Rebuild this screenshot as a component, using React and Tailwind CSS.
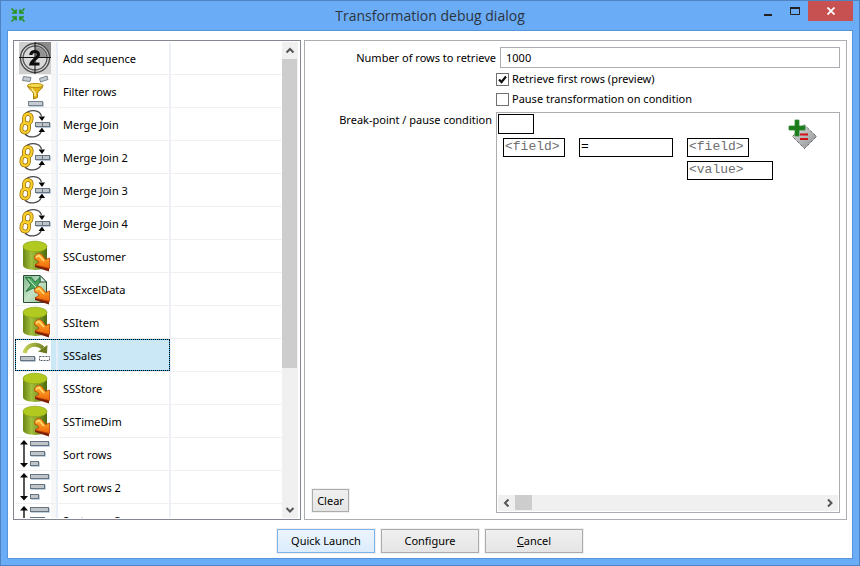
import React, { useState } from "react";

function SequenceIcon() {
  return (
    <svg width="32" height="32" viewBox="0 0 32 32" className="block" aria-hidden="true">
      <rect width="32" height="32" fill="#cfcfcf" />
      <path d="M16 0H32V16H16Z" fill="#8c8c8c" />
      <circle cx="16" cy="16" r="14.5" fill="#e4e4e4" stroke="#4a4a4a" strokeWidth="1.4" />
      <path d="M16 2.500A13.500 13.500 0 0 1 29.500 16H16Z" fill="#b0b0b0" />
      <circle cx="16" cy="16" r="12" fill="#dadada" stroke="#5c5c5c" strokeWidth="1.4" />
      <path d="M16 5A11 11 0 0 1 27 16H16Z" fill="#919191" />
      <path d="M16 0V32M0 15.500H32" stroke="#111" strokeWidth="1" />
      <path d="M11.800 13C11.800 8.300 20 8.300 19.400 13C19 16 13 18 12 22H20.500" fill="none" stroke="#0c0c0c" strokeWidth="3.200" />
    </svg>
  );
}

function FilterIcon() {
  return (
    <svg width="32" height="32" viewBox="0 0 32 32" className="block" aria-hidden="true">
      <g fill="#c5cbd1" stroke="#76828e" strokeWidth="1">
        <path d="M4.500 1.500L12 2.500L11 6.500L3.500 5.500Z" />
        <path d="M20.500 3.500L28 1L29 4.500L21.500 7Z" />
        <rect x="9.500" y="26.500" width="14" height="4" />
      </g>
      <path d="M10 31.500H24.500V27" fill="none" stroke="#bfd0df" />
      <path d="M8.500 10.500C9 14.500 14 15.500 14.500 18.500V24L18.500 22.500V18.500C19 15.500 23.500 14.500 24 10.500Z" fill="#e0b317" stroke="#a97f0a" />
      <ellipse cx="16.250" cy="10.500" rx="7.800" ry="2" fill="#f6dd4d" stroke="#b58a10" />
      <path d="M12.500 13.500L16 17.500V21" fill="none" stroke="#fff0a0" strokeWidth="1.400" />
    </svg>
  );
}

function MergeIcon() {
  return (
    <svg width="32" height="32" viewBox="0 0 32 32" className="block" aria-hidden="true">
      <path d="M6 6C10 1.500 20 1 22.500 8M6 26C10 30.500 20 30 22.500 23" fill="none" stroke="#4a4a4a" strokeWidth="1.300" />
      <path d="M19.500 8.500H26L23 13ZM19.500 24H26L23 19.500Z" fill="#050505" />
      <g fill="none" stroke="#9a6c00" strokeWidth="3.800">
        <rect x="5" y="6" width="7.500" height="9.500" rx="3.500" transform="rotate(8 8.500 11)" />
        <rect x="2.500" y="15" width="7.500" height="9.500" rx="3.500" transform="rotate(8 6 20)" />
      </g>
      <g fill="none" stroke="#f8cf2c" strokeWidth="2.300">
        <rect x="5" y="6" width="7.500" height="9.500" rx="3.500" transform="rotate(8 8.500 11)" />
        <rect x="2.500" y="15" width="7.500" height="9.500" rx="3.500" transform="rotate(8 6 20)" />
      </g>
      <path d="M17 19.500H31.500V15" fill="none" stroke="#b9c9da" strokeWidth="1" />
      <rect x="16.500" y="14.500" width="14" height="4" fill="#c0c5ca" stroke="#667380" />
      <path d="M23.500 14.500V18.500" stroke="#667380" />
    </svg>
  );
}

function OrangeArrow() {
  return (
    <>
      <path d="M16 24L30 26V31.500L16 27Z" fill="#7c1d04" />
      <path d="M15.500 17C17 13 21 12.500 23.500 15.500L26.500 19.500L30.500 18V28.500L16 25L20 22.500C19 20 17.500 19.500 16 19.500Z" fill="url(#arrowFill)" stroke="#b84206" strokeWidth=".8" />
      <path d="M17 17L20 15.500L25 21" fill="none" stroke="#ffe07a" strokeWidth="1.400" />
    </>
  );
}

function DatabaseIcon() {
  return (
    <svg width="32" height="32" viewBox="0 0 32 32" className="block" aria-hidden="true">
      <path d="M4 6V25C4 31.500 28 31.500 28 25V6Z" fill="url(#cylinder)" />
      <ellipse cx="16" cy="6.500" rx="12" ry="5.300" fill="#b2ca20" stroke="#8fa81c" strokeWidth=".8" />
      <OrangeArrow />
    </svg>
  );
}

function ExcelIcon() {
  return (
    <svg width="32" height="32" viewBox="0 0 32 32" className="block" aria-hidden="true">
      <path d="M4.500 2.500H21L27.500 9V29.500H4.500Z" fill="url(#sheet)" stroke="#2b4f36" />
      <path d="M21 2.500V9H27.500Z" fill="#dcefdc" stroke="#2b4f36" />
      <path d="M6.500 4.500H12.500L16 9L21 4.500V9L18.500 12L24.500 18.500H17.500L14.500 15L7 18.500L12 12Z" fill="#4aa45e" stroke="#1b6333" strokeWidth=".8" />
      <path d="M9 5.500L20 17.500" stroke="#d6f0d6" />
      <OrangeArrow />
    </svg>
  );
}

function DummyIcon() {
  return (
    <svg width="32" height="32" viewBox="0 0 32 32" className="block" aria-hidden="true">
      <path d="M5.500 14C8 5 18 3.500 24 9" fill="none" stroke="url(#olive)" strokeWidth="4" />
      <path d="M28.500 6L28 14.500L19 12.500Z" fill="#6e7a1e" />
      <rect x="1.500" y="17.500" width="14" height="4" fill="#c0c5ca" stroke="#667380" />
      <path d="M2 22.500H16.500V18" fill="none" stroke="#b9c9da" />
      <rect x="20.500" y="17.500" width="10" height="4" fill="#fff" stroke="#555f69" strokeDasharray="2 1" />
    </svg>
  );
}

function SortIcon() {
  return (
    <svg width="32" height="32" viewBox="0 0 32 32" className="block" aria-hidden="true">
      <path d="M5 5V26" stroke="#444" strokeWidth="1.800" />
      <path d="M1 6.500L5 2L9 6.500ZM1 25L5 29.500L9 25Z" fill="#080808" />
      <path d="M12 8.500H30.500V4M12 18.500H26.500V14M12 28.500H20.500V24" fill="none" stroke="#bfd0df" />
      <g fill="#c0c5ca" stroke="#667380">
        <rect x="11.500" y="3.500" width="18" height="4" />
        <rect x="11.500" y="13.500" width="14" height="4" />
        <rect x="11.500" y="23.500" width="8" height="4" />
      </g>
    </svg>
  );
}

function IconGradients() {
  return (
    <svg width="0" height="0" className="absolute" aria-hidden="true">
      <defs>
        <linearGradient id="arrowFill" x1="0" y1="0" x2="0" y2="1">
          <stop offset="0" stopColor="#ffb62e" />
          <stop offset="1" stopColor="#f0650a" />
        </linearGradient>
        <linearGradient id="cylinder" x1="0" y1="0" x2="1" y2="0">
          <stop offset="0" stopColor="#6a8614" />
          <stop offset=".35" stopColor="#a3bf3c" />
          <stop offset="1" stopColor="#4d6a10" />
        </linearGradient>
        <linearGradient id="sheet" x1="0" y1="0" x2="1" y2="1">
          <stop offset="0" stopColor="#7fb58a" />
          <stop offset=".5" stopColor="#c4e2c6" />
          <stop offset="1" stopColor="#8cc08f" />
        </linearGradient>
        <linearGradient id="olive" x1="0" y1="0" x2="1" y2="0">
          <stop offset="0" stopColor="#c3cf55" />
          <stop offset="1" stopColor="#7b8825" />
        </linearGradient>
        <linearGradient id="diamond" x1="0" y1="0" x2="1" y2="1">
          <stop offset="0" stopColor="#dedede" />
          <stop offset="1" stopColor="#8d9092" />
        </linearGradient>
      </defs>
    </svg>
  );
}

const steps = [
  ["Add sequence", SequenceIcon],
  ["Filter rows", FilterIcon],
  ["Merge Join", MergeIcon],
  ["Merge Join 2", MergeIcon],
  ["Merge Join 3", MergeIcon],
  ["Merge Join 4", MergeIcon],
  ["SSCustomer", DatabaseIcon],
  ["SSExcelData", ExcelIcon],
  ["SSItem", DatabaseIcon],
  ["SSSales", DummyIcon],
  ["SSStore", DatabaseIcon],
  ["SSTimeDim", DatabaseIcon],
  ["Sort rows", SortIcon],
  ["Sort rows 2", SortIcon],
  ["Sort rows 3", SortIcon],
];

const chevrons = {
  up: "M1.500 6.500L5 3L8.500 6.500",
  down: "M1.500 3L5 6.500L8.500 3",
  left: "M6.500 1.500L3 5L6.500 8.500",
  right: "M3 1.500L6.500 5L3 8.500",
};

function ScrollButton({ direction, className }) {
  return (
    <button type="button" aria-label={`Scroll ${direction}`} className={`flex shrink-0 items-center justify-center ${className}`}>
      <svg width="10" height="10" viewBox="0 0 10 10" aria-hidden="true">
        <path d={chevrons[direction]} fill="none" stroke="#555" strokeWidth="2" />
      </svg>
    </button>
  );
}

function StepList() {
  const [selected, setSelected] = useState("SSSales");
  return (
    <section aria-label="Steps" className="flex w-[288px] shrink-0 overflow-hidden border border-[#828790] py-px pr-0.5 pl-px">
      <div className="min-w-0 flex-1 overflow-hidden">
        <table className="w-full table-fixed border-separate border-spacing-0">
          <colgroup>
            <col className="w-[43px]" />
            <col className="w-[113px]" />
            <col />
          </colgroup>
          <tbody>
            {steps.map(([name, Icon]) => {
              const active = name === selected;
              const fill = active ? "bg-[#cbe8f6]" : "";
              return (
                <tr key={name} onClick={() => setSelected(name)} className="relative h-[33px]">
                  <td className={`border-r-2 border-b border-r-[#e8eef7] border-b-[#f0f0f0] p-0 ${active ? "bg-[#cbe8f6]" : "bg-[#f7f7f7]"}`}>
                    <div className="w-9 bg-white pl-1">
                      <Icon />
                    </div>
                    {active && <div className="absolute top-0 left-0 h-8 w-[155px] border border-[#26a0da] outline-1 -outline-offset-1 outline-dotted outline-black" />}
                  </td>
                  <td className={`border-r-2 border-b border-r-[#edf1f7] border-b-[#f0f0f0] pt-0.5 pr-0 pb-0 pl-[5px] ${fill}`}>{name}</td>
                  <td className="border-b border-[#f0f0f0] p-0" />
                </tr>
              );
            })}
          </tbody>
        </table>
      </div>
      <div className="flex w-4 shrink-0 flex-col bg-[#f0f0f0]">
        <ScrollButton direction="up" className="h-[17px] w-4" />
        <div className="flex flex-1 flex-col">
          <div className="h-[70%] w-[15px] bg-[#cdcdcd]" />
        </div>
        <ScrollButton direction="down" className="h-[17px] w-4" />
      </div>
    </section>
  );
}

function Box({ className, children }) {
  return (
    <button type="button" className={`block border border-black pb-0.5 text-left font-['Liberation_Mono',monospace] text-[13px] leading-3 ${className}`}>
      {children}
    </button>
  );
}

function ConditionEditor() {
  return (
    <div className="flex min-h-0 flex-1 flex-col border border-[#abadb3] p-px">
      <div className="flex flex-1 items-start">
        <div className="flex-1">
          <Box className="h-5 w-9" />
          <div className="mt-1 ml-[5px] flex items-start gap-[14px]">
            <Box className="h-[19px] w-[62px] pl-px text-[#707070]">&lt;field&gt;</Box>
            <Box className="h-[19px] w-[94px] pl-px text-black">=</Box>
            <div className="flex flex-col gap-1">
              <Box className="h-[19px] w-[62px] pl-px text-[#707070]">&lt;field&gt;</Box>
              <Box className="h-[19px] w-[86px] pl-px text-[#707070]">&lt;value&gt;</Box>
            </div>
          </div>
        </div>
        <button type="button" aria-label="Add condition" className="mt-1 mr-[19px]">
          <svg width="32" height="32" viewBox="0 0 32 32" className="block" aria-hidden="true">
            <path d="M17 6.500L29.500 18.500L17.500 30.500L5.500 18.500Z" fill="url(#diamond)" stroke="#333" strokeDasharray="1 1" />
            <path d="M13 16.500H21M13 21H21" stroke="#d20f14" strokeWidth="2" />
            <path d="M8 2H12V8H18V12H12V18H8V12H2V8H8Z" fill="#1c7c1c" stroke="#2f8c2f" strokeWidth=".8" />
          </svg>
        </button>
      </div>
      <div className="flex h-4 shrink-0 bg-[#f0f0f0]">
        <ScrollButton direction="left" className="h-4 w-[17px]" />
        <div className="flex-1">
          <div className="h-[15px] w-[17px] bg-[#cdcdcd]" />
        </div>
        <ScrollButton direction="right" className="h-4 w-[17px]" />
      </div>
    </div>
  );
}

function CheckRow({ id, label, defaultChecked }) {
  return (
    <div className="flex h-5 items-center gap-[3px]">
      <span className="relative block size-[13px]">
        <input id={id} type="checkbox" defaultChecked={defaultChecked} className="peer block size-[13px] appearance-none border border-[#707070] bg-white" />
        <svg width="13" height="13" viewBox="0 0 13 13" className="pointer-events-none absolute top-0 left-0 hidden peer-checked:block" aria-hidden="true">
          <path d="M3 6.500L5.500 9L10 3.500" fill="none" stroke="#111" strokeWidth="2.200" />
        </svg>
      </span>
      <label htmlFor={id}>{label}</label>
    </div>
  );
}

const buttonBase = "border outline-1 outline-[#f0f0f0] bg-linear-to-b";
const buttonGray = "border-[#acacac] from-[#f0f0f0] to-[#e5e5e5]";
const buttonBlue = "border-[#7eb4ea] from-[#ecf4fc] to-[#dcecfc]";

function Settings() {
  return (
    <section aria-label="Debug settings" className="flex min-w-0 flex-1 border border-[#abadb3] px-1.5 py-1.5">
      <div className="flex w-[185px] shrink-0 flex-col items-end">
        <label htmlFor="rows" className="h-[21px] leading-[21px] whitespace-nowrap">Number of rows to retrieve</label>
        <span className="mt-[41px] mr-1 h-[21px] leading-[21px] whitespace-nowrap">Break-point / pause condition</span>
        <button type="button" className={`mt-auto mb-px ml-px h-[23px] w-[37px] self-start ${buttonBase} ${buttonGray}`}>Clear</button>
      </div>
      <div className="flex min-w-0 flex-1 flex-col">
        <input id="rows" type="text" defaultValue="1000" className="ml-1 h-[21px] border border-[#abadb3] px-[5px]" />
        <div className="mt-px mb-[3px]">
          <CheckRow id="preview" label="Retrieve first rows (preview)" defaultChecked />
          <CheckRow id="pause" label="Pause transformation on condition" />
        </div>
        <ConditionEditor />
      </div>
    </section>
  );
}

function TitleBar() {
  return (
    <header className="flex h-[29px] shrink-0 items-start">
      <svg width="16" height="16" viewBox="0 0 16 16" className="mt-1.5 ml-[9px] shrink-0" aria-hidden="true">
        <path d="M1.500 1.500L6 6M14.500 1.500L10 6M1.500 14.500L6 10M14.500 14.500L10 10M6 2.500V6H2M10 2.500V6H14M6 13.500V10H2M10 13.500V10H14" fill="none" stroke="#27931d" strokeWidth="1.700" />
      </svg>
      <h1 className="ml-20 flex-1 pt-1 text-center font-['Open_Sans',sans-serif] text-[14px] leading-[22px] text-[#2b3440]">Transformation debug dialog</h1>
      <div className="flex shrink-0">
        <button type="button" aria-label="Minimize" className="flex h-5 w-[27px] items-center justify-center">
          <svg width="8" height="14" viewBox="0 0 8 14" aria-hidden="true"><path d="M0 11H8" stroke="#222" strokeWidth="2" /></svg>
        </button>
        <button type="button" aria-label="Maximize" className="flex h-5 w-[27px] items-center justify-center">
          <svg width="10" height="8" viewBox="0 0 10 8" aria-hidden="true"><path d="M.5 1H9.500M.5 0V7.500H9.500V0" fill="none" stroke="#222" /><path d="M0 1H10" stroke="#222" strokeWidth="2" /></svg>
        </button>
        <button type="button" aria-label="Close" className="mr-1.5 flex h-5 w-[45px] items-center justify-center bg-[#c75050]">
          <svg width="8" height="8" viewBox="0 0 8 8" aria-hidden="true"><path d="M.5 .5L7.500 7.500M7.500 .5L.5 7.500" stroke="#fff" strokeWidth="1.800" /></svg>
        </button>
      </div>
    </header>
  );
}

export default function App() {
  return (
    <div className="flex h-screen flex-col border border-[#4f84c0] bg-[#6bacf7] font-['Noto_Sans','Open_Sans',sans-serif] text-[11px] leading-4 text-black">
      <IconGradients />
      <TitleBar />
      <main className="mx-1.5 mb-1.5 flex min-h-0 flex-1 flex-col border border-[#5694dc] bg-white px-[5px] pt-[9px] pb-[5px]">
        <div className="flex min-h-0 flex-1 gap-[3px]">
          <StepList />
          <Settings />
        </div>
        <div className="mt-[9px] flex shrink-0 justify-center gap-1.5">
          <button type="button" className={`h-6 w-[98px] ${buttonBase} ${buttonBlue}`}>Quick Launch</button>
          <button type="button" className={`h-6 w-[98px] ${buttonBase} ${buttonGray}`}>Configure</button>
          <button type="button" className={`h-6 w-[98px] ${buttonBase} ${buttonGray}`}><span className="underline">C</span>ancel</button>
        </div>
      </main>
    </div>
  );
}
